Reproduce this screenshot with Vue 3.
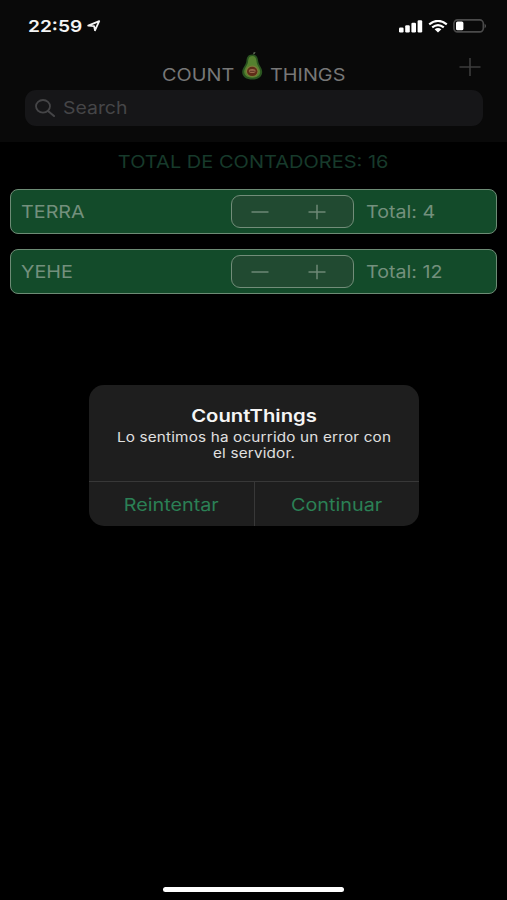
<script setup>
import { ref, computed } from 'vue'

const search = ref('')
const showAlert = ref(true)
const counters = ref([
  { id: 1, title: 'TERRA', count: 4 },
  { id: 2, title: 'YEHE', count: 12 },
])

const total = computed(() => counters.value.reduce((sum, counter) => sum + counter.count, 0))

const handleDecrement = (counter) => {
  if (counter.count > 0) counter.count--
}

const handleCloseAlert = () => {
  showAlert.value = false
}
</script>

<template>
  <div class="screen">
    <header class="header">
      <div class="status">
        <span class="status__time">22:59</span>
        <svg class="status__location" viewBox="0 0 14 12">
          <path d="M1.2 5.7 12.2 1.1 8 10.3 7.1 6.1Z" fill="none" stroke="#f4f4f4" stroke-width="1.8" stroke-linejoin="round" />
        </svg>
        <svg class="status__signal" viewBox="0 0 24 13" fill="#fff">
          <rect x="0" y="7.6" width="4.6" height="4.9" rx="1.2" />
          <rect x="6.2" y="5.2" width="4.6" height="7.3" rx="1.2" />
          <rect x="12.4" y="2.8" width="4.6" height="9.7" rx="1.2" />
          <rect x="18.6" y="0.3" width="4.6" height="12.2" rx="1.2" />
        </svg>
        <svg class="status__wifi" viewBox="0 0 20 13">
          <path d="M1.2 4.3Q10-2.5 18.8 4.3M4.2 7.4Q10 2.9 15.8 7.4" fill="none" stroke="#fff" stroke-width="2.2" />
          <path d="M6.6 9.3Q10 6.7 13.4 9.3L10 12.4Z" fill="#fff" />
        </svg>
        <svg class="status__battery" viewBox="0 0 34 14">
          <rect x="0.9" y="0.9" width="29.4" height="12" rx="3.6" fill="none" stroke="#4b4b4b" stroke-width="1.6" />
          <rect x="3" y="2.5" width="7.4" height="8.8" rx="1.6" fill="#fff" />
          <path d="M31.6 4.4Q34.4 6.9 31.6 9.4Z" fill="#555" />
        </svg>
      </div>

      <div class="nav">
        <div class="nav__title">
          <span class="nav__word nav__word--count">COUNT</span>
          <svg class="nav__logo" viewBox="0 0 22 30">
            <path d="M12 3.4 12.6 1.2 14.6 1 13.6 3Z" fill="#5b6654" />
            <path d="M11.3 3.6C7 3.6 5.7 6.4 5.4 10.2 5 14 1.2 16.5 1.2 21c0 5 4.4 7.6 10 7.6s10-2.6 10-7.6c0-4.5-3.6-7-4-10.8-.3-3.8-1.7-6.6-5.9-6.6Z" fill="#2a5420" />
            <path d="M11.3 5C8 5 7.3 7.8 7 11 6.6 14.7 3.2 17 3.2 20.8c0 3.9 3.6 5.9 8 5.9s8-2 8-5.9c0-3.8-3.2-6.1-3.6-9.8C15.3 7.8 14.6 5 11.3 5Z" fill="#55812f" />
            <ellipse cx="11.2" cy="20.2" rx="6.3" ry="5.6" fill="#7b7c3a" />
            <ellipse cx="11.2" cy="20.4" rx="5.2" ry="4.6" fill="#5f2c18" />
            <ellipse cx="11.2" cy="20" rx="3.4" ry="2.1" fill="#9a6a4c" />
            <path d="M8.7 20.3h5" fill="none" stroke="#4a2014" stroke-width="0.8" />
          </svg>
          <span class="nav__word nav__word--things">THINGS</span>
        </div>
        <button class="nav__add" type="button" aria-label="Add">
          <svg viewBox="0 0 22 20"><path d="M0.5 10h21M11 1v18" stroke="#3d3d3d" stroke-width="1.6" /></svg>
        </button>
      </div>

      <label class="search">
        <svg class="search__icon" viewBox="0 0 20 18">
          <ellipse cx="8" cy="7.3" rx="7" ry="6.3" fill="none" stroke="#454547" stroke-width="1.8" />
          <path d="m13 12 6 5" stroke="#454547" stroke-width="2" stroke-linecap="round" />
        </svg>
        <input class="search__input" v-model="search" type="text" placeholder="Search">
      </label>
    </header>

    <main class="content">
      <h1 class="content__total"><span>TOTAL DE CONTADORES: {{ total }}</span></h1>
      <div v-for="counter in counters" :key="counter.id" class="counter">
        <span class="counter__title">{{ counter.title }}</span>
        <div class="stepper">
          <button class="stepper__button" type="button" aria-label="Decrement" @click="handleDecrement(counter)">
            <svg viewBox="0 0 18 16"><path d="M0.5 8h17" /></svg>
          </button>
          <button class="stepper__button" type="button" aria-label="Increment" @click="counter.count++">
            <svg viewBox="0 0 18 16"><path d="M0.5 8h17M9 0.8v14.4" /></svg>
          </button>
        </div>
        <span class="counter__count">Total: {{ counter.count }}</span>
      </div>
    </main>

    <div v-if="showAlert" class="overlay">
      <div class="alert">
        <div class="alert__body">
          <h2 class="alert__title">CountThings</h2>
          <p class="alert__message">Lo sentimos ha ocurrido un error con<br>el servidor.</p>
        </div>
        <div class="alert__actions">
          <button class="alert__button" type="button" @click="handleCloseAlert"><span>Reintentar</span></button>
          <button class="alert__button" type="button" @click="handleCloseAlert"><span>Continuar</span></button>
        </div>
      </div>
    </div>

    <div class="home"></div>
  </div>
</template>

<style>
body {
  background-color: #000;
}
</style>

<style scoped>
.screen {
  background-color: #000;
  display: flex;
  flex-direction: column;
  font-family: Inter, "Liberation Sans", sans-serif;
  height: 900px;
  overflow: hidden;
  position: relative;
  width: 507px;
}

button {
  background: none;
  border: 0;
  color: inherit;
  font: inherit;
  padding: 0;
}

svg {
  display: block;
  flex: none;
}

.header {
  background-color: #090909;
  box-sizing: border-box;
  height: 142px;
}

.status {
  align-items: center;
  box-sizing: border-box;
  display: flex;
  height: 52px;
  padding: 0 20px 0 28px;
}

.status__time {
  color: #f4f4f4;
  font-size: 16.5px;
  font-weight: 600;
  transform: scaleX(1.16);
  transform-origin: left;
  width: 59px;
}

.status__location {
  height: 12px;
  width: 14px;
}

.status__signal {
  height: 13px;
  margin-left: auto;
  width: 24px;
}

.status__wifi {
  height: 13px;
  margin-left: 5px;
  width: 20px;
}

.status__battery {
  height: 14px;
  margin-left: 5px;
  width: 34px;
}

.nav {
  display: flex;
  height: 38px;
  justify-content: space-between;
  padding: 0 26px 0 162px;
}

.nav__title {
  display: flex;
}

.nav__word {
  color: #777;
  font-size: 17.2px;
  line-height: 21px;
  margin-top: 12px;
  transform: scaleX(1.155);
  transform-origin: left;
}

.nav__word--count {
  width: 79px;
}

.nav__word--things {
  margin-left: 7px;
}

.nav__logo {
  height: 30px;
  margin-top: -1px;
  width: 22px;
}

.nav__add {
  height: 20px;
  margin-top: 5px;
  width: 22px;
}

.search {
  align-items: center;
  background-color: #161618;
  border-radius: 11px;
  box-sizing: border-box;
  display: flex;
  height: 36px;
  margin: 0 24.5px 0 25px;
  padding: 0 0 1px 10px;
}

.search__icon {
  height: 18px;
  width: 20px;
}

.search__input {
  background: none;
  border: 0;
  color: #777;
  font-family: inherit;
  font-size: 17.2px;
  margin-left: 7.5px;
  outline: none;
  padding: 0 0 1px;
  transform: scaleX(1.13);
  transform-origin: left;
  width: 300px;
}

.search__input::placeholder {
  color: #454547;
  opacity: 1;
}

.content {
  padding: 9px 10px 0;
}

.content__total {
  color: #173a2b;
  font-size: 17.2px;
  font-weight: 400;
  line-height: 21px;
  margin: 0 0 17px;
  text-align: center;
  white-space: nowrap;
}

.content__total span {
  display: inline-block;
  transform: scaleX(1.165);
}

.counter {
  align-items: center;
  background-color: #134b2a;
  border: 1.5px solid #6d8b75;
  border-radius: 8px;
  box-sizing: border-box;
  color: #73907d;
  display: flex;
  font-size: 17.2px;
  height: 45px;
  margin-bottom: 15px;
  padding-left: 10px;
}

.counter__title {
  transform: scaleX(1.15);
  transform-origin: left;
  width: 209.5px;
}

.counter__count {
  margin-left: 12.5px;
  transform: scaleX(1.145);
  transform-origin: left;
}

.stepper {
  background-color: #214a31;
  border: 1.5px solid #728d79;
  border-radius: 9px;
  box-sizing: border-box;
  display: flex;
  height: 33px;
  justify-content: space-around;
  padding: 0 7px 0 0;
  width: 123px;
}

.stepper__button svg {
  fill: none;
  height: 16px;
  stroke: #6d8876;
  stroke-width: 1.5;
  width: 18px;
}

.overlay {
  display: flex;
  inset: 0;
  justify-content: center;
  padding-top: 385px;
  position: absolute;
}

.alert {
  background-color: #1e1e1e;
  border-radius: 15px;
  height: 141px;
  overflow: hidden;
  width: 330px;
}

.alert__body {
  border-bottom: 1px solid #383838;
  box-sizing: border-box;
  height: 97px;
  padding-top: 21px;
  text-align: center;
}

.alert__title {
  color: #f5f5f5;
  font-size: 17px;
  font-weight: 600;
  line-height: 21px;
  margin: 0 0 2px;
  transform: scaleX(1.19);
}

.alert__message {
  color: #e0e0e0;
  font-size: 13px;
  letter-spacing: 0.15px;
  line-height: 16px;
  margin: 0;
  transform: scaleX(1.175);
  white-space: nowrap;
}

.alert__actions {
  display: flex;
  height: 44px;
}

.alert__button {
  color: #2b8055;
  flex: 1;
  font-size: 17.2px;
}

.alert__button:first-child {
  padding-left: 1px;
}

.alert__button + .alert__button {
  border-left: 1px solid #383838;
}

.alert__button span {
  display: inline-block;
  transform: scaleX(1.15);
}

.home {
  background-color: #fff;
  border-radius: 3px;
  height: 5px;
  margin: auto auto 8px;
  width: 181px;
}
</style>
